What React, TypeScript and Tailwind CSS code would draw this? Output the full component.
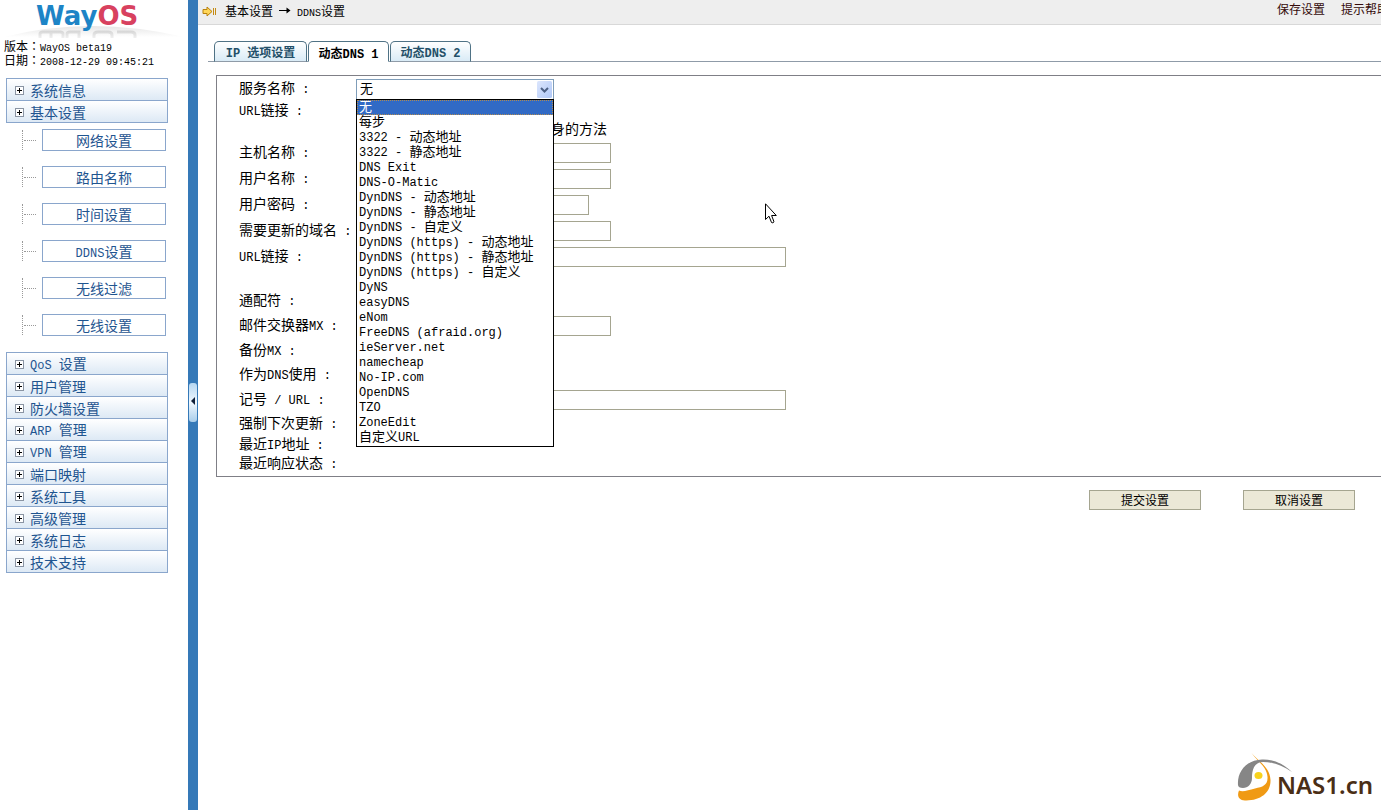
import React from "react";

/* Sets Latin runs in a half-width monospace face beside full-width Chinese glyphs. */
function Mixed({ text, latin }: { text: string; latin: string }) {
  return (
    <>
      {text.split(/([\x20-\x7e]+)/).map((part, i) =>
        i % 2 === 1 ? (
          <span key={i} className={`whitespace-pre font-['Liberation_Mono',monospace] ${latin}`}>
            {part}
          </span>
        ) : (
          part
        ),
      )}
    </>
  );
}

const SUB_ITEMS = ["网络设置", "路由名称", "时间设置", "DDNS设置", "无线过滤", "无线设置"];

const TOP_MENU = ["系统信息", "基本设置"];

const BOTTOM_MENU = [
  "QoS 设置",
  "用户管理",
  "防火墙设置",
  "ARP 管理",
  "VPN 管理",
  "端口映射",
  "系统工具",
  "高级管理",
  "系统日志",
  "技术支持",
];

const SERVICES = [
  "无",
  "每步",
  "3322 - 动态地址",
  "3322 - 静态地址",
  "DNS Exit",
  "DNS-O-Matic",
  "DynDNS - 动态地址",
  "DynDNS - 静态地址",
  "DynDNS - 自定义",
  "DynDNS (https) - 动态地址",
  "DynDNS (https) - 静态地址",
  "DynDNS (https) - 自定义",
  "DyNS",
  "easyDNS",
  "eNom",
  "FreeDNS (afraid.org)",
  "ieServer.net",
  "namecheap",
  "No-IP.com",
  "OpenDNS",
  "TZO",
  "ZoneEdit",
  "自定义URL",
];

function PlusIcon() {
  return (
    <svg width="9" height="9" viewBox="0 0 9 9" shapeRendering="crispEdges" aria-hidden="true">
      <rect x="0.5" y="0.5" width="8" height="8" fill="#fff" stroke="#8a94a3" />
      <path d="M2 4.5h5M4.5 2v5" stroke="#000" />
    </svg>
  );
}

function Menu({ items }: { items: string[] }) {
  return (
    <ul className="border border-b-0 border-[#8aa6cc]">
      {items.map((item) => (
        <li key={item} className="border-b border-[#8aa6cc]">
          <a
            href="#"
            className="flex h-[21px] items-center gap-[6px] bg-linear-to-b from-white to-[#dde9f5] pt-px pl-2 text-[14px] leading-[20px] text-[#1f5590]"
          >
            <PlusIcon />
            <span>
              <Mixed text={item} latin="text-[12px]" />
            </span>
          </a>
        </li>
      ))}
    </ul>
  );
}

function WayLogo() {
  return (
    <svg width="188" height="38" viewBox="0 0 188 38" role="img" aria-label="WayOS">
      <defs>
        <linearGradient id="arc" x1="0" x2="0" y1="0" y2="1">
          <stop offset="0" stopColor="#e6e6e6" />
          <stop offset="1" stopColor="#ffffff" />
        </linearGradient>
        <linearGradient id="mirror" x1="0" x2="0" y1="30" y2="38" gradientUnits="userSpaceOnUse">
          <stop offset="0" stopColor="#d2d2d2" />
          <stop offset="1" stopColor="#f0f0f0" />
        </linearGradient>
      </defs>
      <path d="M4 37Q90 15 184 37Z" fill="url(#arc)" />
      <g fill="none" stroke="url(#mirror)" strokeWidth="3">
        <path d="M40 38v-4q0-2 3-2h17q3 0 3 2v4M51 32v6" />
        <path d="M67 38v-4q0-2 3-2h9v6" />
        <path d="M98 32h10q4 0 4 3v3M98 32q-4 0-4 3v3" />
        <path d="M117 32h14q4 0 4 3v3" />
      </g>
      <text
        x="36"
        y="25"
        fontSize="26"
        fontWeight="700"
        fontFamily="'DejaVu Sans', sans-serif"
        fill="#1d84c6"
      >
        Way<tspan fill="#d8415f">OS</tspan>
      </text>
    </svg>
  );
}

function Sidebar() {
  return (
    <nav className="w-[188px] shrink-0">
      <WayLogo />
      <div className="pt-px pl-1 text-[12px] leading-[14px] text-black">
        <p className="h-[14px]">
          版本<span className="font-['Noto_Sans_CJK_TC',sans-serif]">：</span>
          <Mixed text="WayOS beta19" latin="text-[10px]" />
        </p>
        <p className="h-[14px]">
          日期<span className="font-['Noto_Sans_CJK_TC',sans-serif]">：</span>
          <Mixed text="2008-12-29 09:45:21" latin="text-[10px]" />
        </p>
      </div>
      <div className="mt-[11px] mr-5 ml-[6px]">
        <Menu items={TOP_MENU} />
        <ul className="my-[6px] mb-4 flex flex-col gap-[15px] pr-[2px] pl-4">
          {SUB_ITEMS.map((item) => (
            <li key={item} className="flex h-[22px] items-center">
              <div className="flex h-5 w-5 items-center border-l border-dotted border-[#999]">
                <div className="ml-px w-3 border-t border-dotted border-[#999]" />
              </div>
              <a
                href="#"
                className="h-[22px] flex-1 border border-[#8aa6cc] text-center text-[14px] leading-[20px] text-[#1f5590]"
              >
                <Mixed text={item} latin="text-[12px]" />
              </a>
            </li>
          ))}
        </ul>
        <Menu items={BOTTOM_MENU} />
      </div>
    </nav>
  );
}

function Splitter() {
  return (
    <div className="relative w-[10px] shrink-0 bg-[#3579b8]">
      <button
        type="button"
        aria-label="收起菜单"
        className="absolute top-[383px] left-px flex h-[39px] w-[8px] items-center justify-center rounded-[3px] bg-linear-to-b from-[#b5d6f0] via-[#f0f8ff] to-[#a8cdea]"
      >
        <svg width="4" height="8" viewBox="0 0 4 8" className="mb-1" aria-hidden="true">
          <path d="M4 0v8L0 4z" fill="#10203a" />
        </svg>
      </button>
    </div>
  );
}

function Header() {
  return (
    <header className="flex h-[25px] items-start border-b border-[#d8d8d8] bg-[#eeeeee] pl-1 text-[12px] leading-[22px] whitespace-nowrap text-black">
      <svg className="mt-[6px] mr-2" width="15" height="11" viewBox="0 0 15 11" aria-hidden="true">
        <path
          d="M1 3.5h4V1l5 4.500L5 10V7.500H1z"
          fill="#ffd75a"
          stroke="#b9810c"
          strokeLinejoin="round"
        />
        <path d="M11.500 2v7M13.500 2v7" stroke="#c48a12" />
      </svg>
      <span>基本设置</span>
      <svg className="mx-[6px] mt-[7px]" width="12" height="8" viewBox="0 0 12 8" aria-hidden="true">
        <path d="M0 3.500h11" stroke="#000" />
        <path d="M7.500 0.500L11.500 3.500L7.500 6.500" fill="#000" />
      </svg>
      <span>
        <Mixed text="DDNS设置" latin="text-[10px]" />
      </span>
      <div className="-mr-2 ml-auto flex gap-4 leading-[18px] text-[#330a0a]">
        <a href="#">保存设置</a>
        <a href="#">提示帮助</a>
      </div>
    </header>
  );
}

const TABS = [
  { label: "IP 选项设置", active: false, width: "w-[93px]" },
  { label: "动态DNS 1", active: true, width: "w-[81px]" },
  { label: "动态DNS 2", active: false, width: "w-[81px]" },
];

function Tabs() {
  return (
    <div className="ml-[10px] flex h-[21px] border-b border-[#8f9ba8] pl-[6px]">
      <div role="tablist" className="flex h-[21px] gap-px">
        {TABS.map((tab) => (
          <button
            key={tab.label}
            type="button"
            role="tab"
            aria-selected={tab.active}
            className={`rounded-t-[5px] border border-[#4f7285] text-[12px] font-bold whitespace-nowrap ${tab.width} ${
              tab.active
                ? "border-b-white bg-white pt-[2px] leading-[18px] text-black"
                : "border-b-[#8f9ba8] bg-linear-to-b from-white to-[#d9ebf6] leading-[20px] text-[#234f68]"
            }`}
          >
            <Mixed text={tab.label} latin="text-[12px]" />
          </button>
        ))}
      </div>
    </div>
  );
}

function ServiceSelect() {
  return (
    <div className="relative w-[198px]">
      <select
        id="service"
        defaultValue="无"
        className="block h-[21px] w-full appearance-none border border-[#7f9db9] bg-white pb-[3px] pl-[3px] text-[13px] leading-[16px] text-black outline-none"
      >
        {SERVICES.map((service) => (
          <option key={service}>{service}</option>
        ))}
      </select>
      <svg
        className="pointer-events-none absolute top-[2px] right-[2px]"
        width="15"
        height="17"
        viewBox="0 0 15 17"
        aria-hidden="true"
      >
        <defs>
          <linearGradient id="drop" x1="0" x2="1" y1="0" y2="1">
            <stop offset="0" stopColor="#dce6fd" />
            <stop offset="1" stopColor="#b0c8f7" />
          </linearGradient>
        </defs>
        <rect width="15" height="17" rx="1.500" fill="url(#drop)" />
        <path d="M4 7l3.500 3.500L11 7" fill="none" stroke="#4d6185" strokeWidth="2" />
      </svg>
      <ul
        role="listbox"
        aria-label="服务名称"
        className="absolute top-[20px] left-0 z-10 w-full border border-black bg-white pb-px text-[13px] leading-[12px] whitespace-nowrap text-black"
      >
        {SERVICES.map((service, i) => (
          <li
            key={service}
            role="option"
            aria-selected={i === 0}
            className={`h-[15px] pl-[2px] ${
              i === 0 ? "bg-[#316ac5] text-white outline-1 -outline-offset-1 outline-[#b08a50] outline-dotted" : ""
            }`}
          >
            <Mixed text={service} latin="text-[12px]" />
          </li>
        ))}
      </ul>
    </div>
  );
}

function Row({
  label,
  height,
  id,
  children,
}: {
  label: string;
  height: string;
  id?: string;
  children?: React.ReactNode;
}) {
  const text = <Mixed text={label} latin="text-[12px]" />;
  const style = "w-[117px] shrink-0 pb-px whitespace-nowrap";
  return (
    <div className={`flex items-center ${height}`}>
      {id ? (
        <label htmlFor={id} className={style}>
          {text}
        </label>
      ) : (
        <span className={style}>{text}</span>
      )}
      {children}
    </div>
  );
}

function Field({ id, width, type = "text" }: { id: string; width: string; type?: string }) {
  return (
    <input
      id={id}
      type={type}
      className={`h-5 border border-[#a5a590] bg-white px-1 text-[12px] outline-none ${width}`}
    />
  );
}

function DdnsForm() {
  return (
    <form>
      <div className="mt-[13px] ml-[18px] border border-r-0 border-[#7f7f86] pb-[2px] pl-[22px] text-[14px] leading-[18px] text-black">
        <Row label="服务名称 :" height="h-[26px]" id="service">
          <ServiceSelect />
        </Row>
        <Row label="URL链接 :" height="h-[18px]" />
        <p className="h-5 pl-[312px] leading-[16px]">身的方法</p>
        <Row label="主机名称 :" height="h-[26px]" id="host">
          <Field id="host" width="w-[255px]" />
        </Row>
        <Row label="用户名称 :" height="h-[26px]" id="user">
          <Field id="user" width="w-[255px]" />
        </Row>
        <Row label="用户密码 :" height="h-[26px]" id="password">
          <Field id="password" type="password" width="w-[233px]" />
        </Row>
        <Row label="需要更新的域名 :" height="h-[26px]" id="domain">
          <Field id="domain" width="w-[255px]" />
        </Row>
        <div className="mb-[18px]">
          <Row label="URL链接 :" height="h-[26px]" id="url">
            <Field id="url" width="w-[430px]" />
          </Row>
        </div>
        <Row label="通配符 :" height="h-[25px]" />
        <Row label="邮件交换器MX :" height="h-[25px]" id="mx">
          <Field id="mx" width="w-[255px]" />
        </Row>
        <Row label="备份MX :" height="h-[25px]" />
        <Row label="作为DNS使用 :" height="h-[24px]" />
        <Row label="记号 / URL :" height="h-[25px]" id="token">
          <Field id="token" width="w-[430px]" />
        </Row>
        <Row label="强制下次更新 :" height="h-[24px]" />
        <Row label="最近IP地址 :" height="h-[18px]" />
        <Row label="最近响应状态 :" height="h-[20px]" />
      </div>
      <div className="mt-[13px] flex justify-end gap-[42px] pr-[26px] text-[12px] leading-[18px] text-black">
        <button type="submit" className="h-5 w-28 border border-[#a5a590] bg-[#ebe8d7]">
          提交设置
        </button>
        <button type="reset" className="h-5 w-28 border border-[#a5a590] bg-[#ebe8d7]">
          取消设置
        </button>
      </div>
    </form>
  );
}

function Watermark() {
  return (
    <div className="absolute right-2 bottom-[7px] flex items-end">
      <svg width="58" height="50" viewBox="0 0 58 50" className="-mr-[17px]" aria-hidden="true">
        <path
          d="M15.500 0C22 8 34 14 34.500 27C35 40 24 48 9 47.500C2 47 1 42 3 37.500C7 39.500 12 37 19 35.500C27 34 32 32 31.500 24C31 14 22 9 15.500 0Z"
          fill="#f09a14"
        />
        <path
          d="M2 32C1 18 11 7 26 6.500C37 6 48 11 56 19C46 12.500 37 9 27 9C18 9 16 17 16 25C16 31 12 35 7 35C4 35 2 34 2 32Z"
          fill="#868686"
        />
        <ellipse cx="22.500" cy="22.500" rx="4" ry="3.500" fill="#f7d21c" />
      </svg>
      <span className="font-['Noto_Sans',sans-serif] text-[24px] leading-[36px] font-semibold text-[#4a2e16]">
        NAS1.cn
      </span>
    </div>
  );
}

export default function App() {
  return (
    <div className="relative flex min-h-screen overflow-hidden bg-white font-['Noto_Sans_CJK_SC',sans-serif]">
      <Sidebar />
      <Splitter />
      <main className="min-w-0 flex-1">
        <Header />
        <div className="mt-4">
          <Tabs />
        </div>
        <DdnsForm />
      </main>
      <Watermark />
      <svg
        className="pointer-events-none absolute top-[203px] left-[765px]"
        width="12"
        height="21"
        viewBox="0 0 12 21"
        aria-hidden="true"
      >
        <path
          d="M0.500 0.800V16.500L4 13.200L6.500 19.500Q8 20.500 9 18.800L6.600 12.500H11.300Z"
          fill="#fff"
          stroke="#000"
        />
      </svg>
    </div>
  );
}
